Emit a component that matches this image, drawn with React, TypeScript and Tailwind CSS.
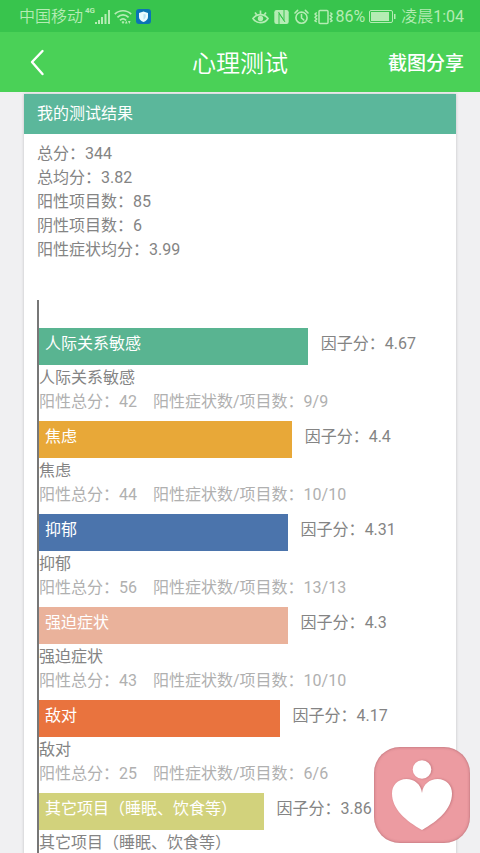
import React from 'react';

interface Factor {
  name: string;
  score: string;
  total: number;
  items: string;
  percent: number;
  color: string;
}

const summary = [
  { label: '总分', value: '344' },
  { label: '总均分', value: '3.82' },
  { label: '阳性项目数', value: '85' },
  { label: '阴性项目数', value: '6' },
  { label: '阳性症状均分', value: '3.99' },
];

const factors: Factor[] = [
  { name: '人际关系敏感', score: '4.67', total: 42, items: '9/9', percent: 67, color: 'bg-[#59b491]' },
  { name: '焦虑', score: '4.4', total: 44, items: '10/10', percent: 63, color: 'bg-[#e8a838]' },
  { name: '抑郁', score: '4.31', total: 56, items: '13/13', percent: 62, color: 'bg-[#4b74ac]' },
  { name: '强迫症状', score: '4.3', total: 43, items: '10/10', percent: 62, color: 'bg-[#eab29b]' },
  { name: '敌对', score: '4.17', total: 25, items: '6/6', percent: 60, color: 'bg-[#e9733e]' },
];

const StatusBar: React.FC = () => (
  <div className="flex h-8 shrink-0 items-center justify-between bg-[#38c44d] pt-px pr-4 pl-[19px] text-base text-[#b5ecb4]">
    <div className="flex items-center">
      <span className="font-[350]">中国移动</span>
      {/* Network type and signal */}
      <span className="mt-0.5 ml-0.5 self-start text-[8px] leading-2 font-bold">4G</span>
      <svg className="h-4 w-4" viewBox="0 0 16 16" fill="currentColor" aria-label="信号">
        <rect x="0" y="13" width="2" height="2" />
        <rect x="3" y="11" width="2" height="4" />
        <rect x="6" y="8" width="2" height="7" />
        <rect x="9.5" y="5" width="2" height="10" />
        <rect x="13" y="1" width="2" height="14" />
      </svg>
      <svg className="ml-[3px] h-4 w-[18px]" viewBox="0 0 18 16" fill="none" stroke="currentColor" strokeWidth="1.7" aria-label="无线网络">
        <path d="M.8 5.2C5.3.6 12.7.6 17.2 5.2" />
        <path d="M3.4 8.4C6.7 5 11.3 5 14.6 8.4" />
        <path d="M6 11.4c1.9-2 4.1-2 6 0" />
        <path d="M7.5 13l1.5-1 1.5 1L9 15z" fill="currentColor" stroke="none" />
        <path d="M11 14.5l1.3-3 1.3 3zM14 12l1.3 3 1.3-3z" fill="currentColor" stroke="none" />
      </svg>
      <svg className="ml-1 h-[15px] w-[15px]" viewBox="0 0 15 15" aria-label="安全">
        <rect width="15" height="15" rx="3" fill="#0b74b5" />
        <path d="M7.5 2.5 12 4v4c0 2.4-2 4-4.5 5C5 12 3 10.4 3 8V4z" fill="#e9fbff" />
        <path d="M7.5 5v5.5c1.3-.6 2.2-1.5 2.2-2.7V5.600z" fill="#b9e4f5" />
      </svg>
    </div>
    <div className="flex items-center">
      <svg className="h-4 w-[17px]" viewBox="0 0 17 16" fill="none" stroke="currentColor" strokeWidth="1.7" aria-label="护眼">
        <path d="M1 9.5c3.5-5.3 11.5-5.3 15 0-3.5 5.6-11.5 5.6-15 0z" />
        <path d="M8.500 1.500v4M3 3.500l1.700 2.300M14 3.500l-1.700 2.300" />
        <circle cx="8.5" cy="9.5" r="2.7" fill="currentColor" stroke="none" />
      </svg>
      <svg className="ml-[5px] h-4 w-[15px]" viewBox="0 0 15 16" fill="none" aria-label="NFC">
        <rect x=".3" y="1" width="14.4" height="14" rx="2.2" fill="currentColor" />
        <path d="M5 15V4.500l6 8.500M10 1v10.500L4.500 3" stroke="#38c44d" strokeWidth="1" />
      </svg>
      <svg className="ml-[5px] h-4 w-[15px]" viewBox="0 0 15 16" fill="none" stroke="currentColor" strokeWidth="1.6" strokeLinecap="round" aria-label="闹钟">
        <circle cx="7.5" cy="8.7" r="5.6" />
        <path d="M7.5 5.5v3.4L9.800 11M1 4l2.600-2.600M14 4l-2.600-2.600" />
      </svg>
      <svg className="ml-[5px] h-4 w-[19px]" viewBox="0 0 19 16" fill="none" stroke="currentColor" strokeWidth="1.5" aria-label="振动">
        <rect x="5" y="1.5" width="9" height="13" rx="1" />
        <path d="M2.700 3.500 1 5l1.700 1.700L1 8.300 2.700 10 1 11.700l1.700 1.300M16.300 3.500 18 5l-1.700 1.700L18 8.300 16.300 10l1.700 1.700-1.700 1.300" />
      </svg>
      <span className="ml-0.5">86%</span>
      <svg className="ml-1 h-[13px] w-7" viewBox="0 0 28 13" fill="none" aria-label="电池">
        <rect x=".5" y=".5" width="23" height="12" rx="1.5" stroke="currentColor" />
        <rect x="2" y="2" width="18" height="9" fill="currentColor" />
        <rect x="25" y="4" width="1.5" height="5" fill="currentColor" />
      </svg>
      <span className="ml-1">
        <span className="font-[350]">凌晨</span>1:04
      </span>
    </div>
  </div>
);

const FactorBar: React.FC<{ name: string; score: string; percent: number; color: string }> = ({
  name,
  score,
  percent,
  color,
}) => (
  <div className="flex h-[37px]">
    <div className={`shrink-0 pl-1.5 leading-8 whitespace-nowrap text-white ${color}`} style={{ width: `${percent}%` }}>
      {name}
    </div>
    <span className="pl-[13px] leading-8 whitespace-nowrap">因子分：{score}</span>
  </div>
);

export default function App() {
  return (
    <div className="flex h-screen flex-col bg-[#f0f0f2] font-[Roboto,'Noto_Sans_CJK_SC',sans-serif] text-base text-[#848484]">
      <StatusBar />

      {/* Title bar */}
      <header className="grid h-[60px] shrink-0 grid-cols-[1fr_auto_1fr] items-center bg-[#4ad157] px-4 pt-0.5 text-white">
        <button type="button" aria-label="返回" className="ml-3 justify-self-start">
          <svg className="h-7 w-5" viewBox="0 0 20 28" fill="none" stroke="currentColor" strokeWidth="2.4" strokeLinecap="round" strokeLinejoin="round">
            <path d="M14.500 2 4 13 14.500 25" />
          </svg>
        </button>
        <h1 className="pt-0.5 text-2xl leading-8 font-[350]">心理测试</h1>
        <button type="button" className="justify-self-end pt-0.5 text-[19px] leading-8 font-medium">
          截图分享
        </button>
      </header>

      <main className="min-h-0 flex-1 overflow-y-auto px-6 pt-0.5 [scrollbar-width:none]">
        <section className="bg-white shadow-[0_0_3px_rgba(0,0,0,0.2)]">
          <h2 className="bg-[#5bb79b] px-[13px] leading-10 text-white">我的测试结果</h2>
          <div className="pt-2 pr-4 pl-[13px]">
            {summary.map((row) => (
              <p key={row.label}>
                {row.label}：{row.value}
              </p>
            ))}

            {/* Factor chart */}
            <div className="mt-[38px] border-l-2 border-[#777] pt-7">
              {factors.map((f) => (
                <div key={f.name} className="pb-[7px]">
                  <FactorBar name={f.name} score={f.score} percent={f.percent} color={f.color} />
                  <p className="pt-px">{f.name}</p>
                  <p className="text-[#b0b0b0]">
                    阳性总分：{f.total}
                    <span className="ml-4">阳性症状数/项目数：{f.items}</span>
                  </p>
                </div>
              ))}
              <FactorBar name="其它项目（睡眠、饮食等）" score="3.86" percent={56} color="bg-[#d2d27c]" />
              <p className="pt-px">其它项目（睡眠、饮食等）</p>
            </div>
          </div>
        </section>
      </main>

      {/* Floating shortcut */}
      <button type="button" aria-label="心理关怀" className="fixed right-2.5 bottom-2.5 h-24 w-24 rounded-[26px] bg-[#ec9ba1] shadow-[inset_0_0_3px_rgba(110,50,60,0.5)]">
        <svg className="h-24 w-24 drop-shadow-[1px_0_1px_rgba(130,60,70,0.35)]" viewBox="0 0 96 96" fill="#fff">
          <circle cx="48" cy="22.5" r="9.3" />
          <path d="M48 46C47 37 40 32 32.500 32 23.500 32 18 38.500 18 46.500 18 62 32 74 48 83 64 74 78 62 78 46.500 78 38.500 72.500 32 63.500 32 56 32 49 37 48 46z" />
        </svg>
      </button>
    </div>
  );
}
